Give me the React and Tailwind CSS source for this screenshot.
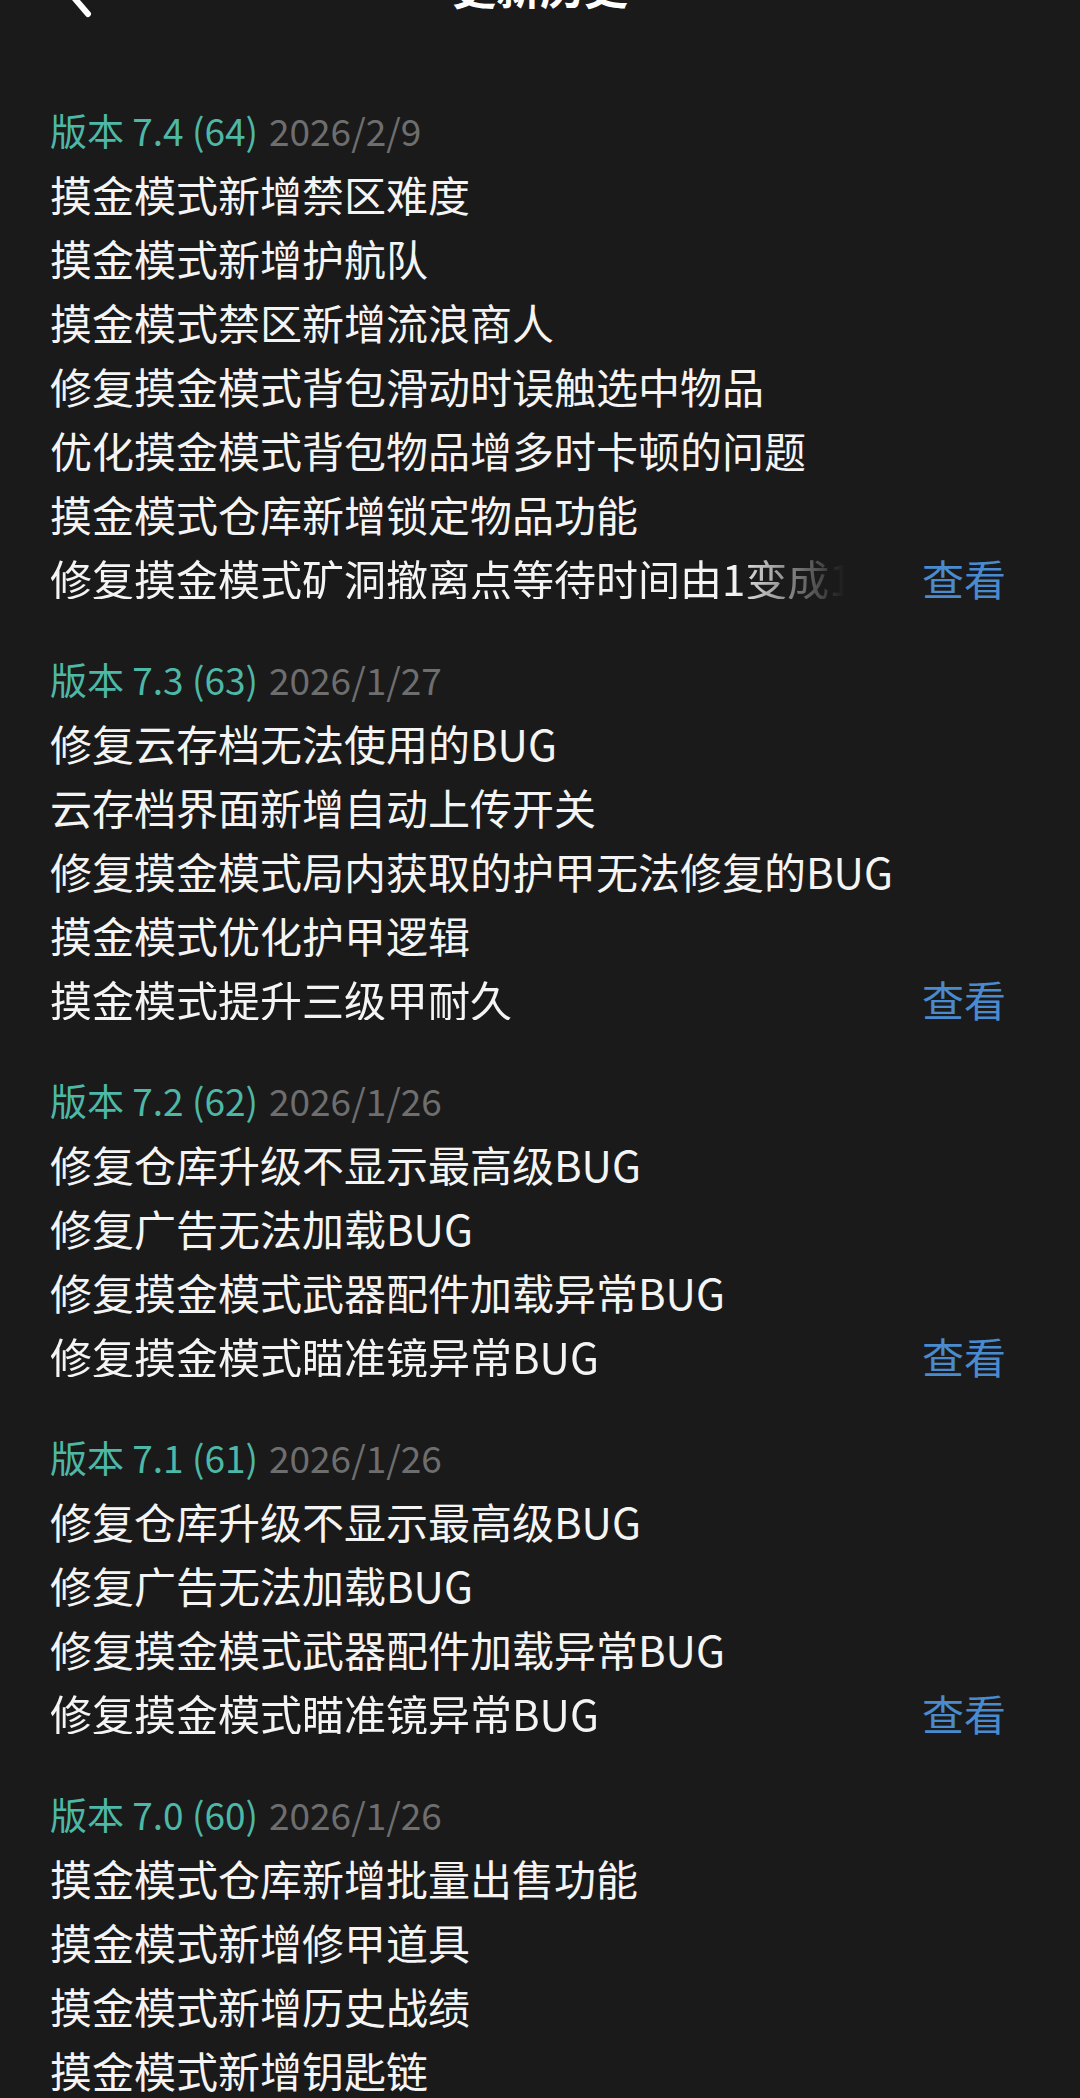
import React from 'react';

const sections = [
	{
		version: '版本 7.4 (64)',
		date: '2026/2/9',
		items: [
			'摸金模式新增禁区难度',
			'摸金模式新增护航队',
			'摸金模式禁区新增流浪商人',
			'修复摸金模式背包滑动时误触选中物品',
			'优化摸金模式背包物品增多时卡顿的问题',
			'摸金模式仓库新增锁定物品功能',
			'修复摸金模式矿洞撤离点等待时间由1变成10秒',
		],
	},
	{
		version: '版本 7.3 (63)',
		date: '2026/1/27',
		items: [
			'修复云存档无法使用的BUG',
			'云存档界面新增自动上传开关',
			'修复摸金模式局内获取的护甲无法修复的BUG',
			'摸金模式优化护甲逻辑',
			'摸金模式提升三级甲耐久',
		],
	},
	{
		version: '版本 7.2 (62)',
		date: '2026/1/26',
		items: [
			'修复仓库升级不显示最高级BUG',
			'修复广告无法加载BUG',
			'修复摸金模式武器配件加载异常BUG',
			'修复摸金模式瞄准镜异常BUG',
		],
	},
	{
		version: '版本 7.1 (61)',
		date: '2026/1/26',
		items: [
			'修复仓库升级不显示最高级BUG',
			'修复广告无法加载BUG',
			'修复摸金模式武器配件加载异常BUG',
			'修复摸金模式瞄准镜异常BUG',
		],
	},
	{
		version: '版本 7.0 (60)',
		date: '2026/1/26',
		items: [
			'摸金模式仓库新增批量出售功能',
			'摸金模式新增修甲道具',
			'摸金模式新增历史战绩',
			'摸金模式新增钥匙链',
		],
	},
];

function Section({ data, last }) {
	const lastIndex = data.items.length - 1;
	return (
		<div className={last ? '' : 'mb-[37px]'}>
			<div className="h-[64px] flex items-center text-[37px] leading-none">
				<span className="text-[#4db8a6]">{data.version}</span>
				<span className="ml-[11px] text-[#6e6e6e]">{data.date}</span>
			</div>
			{data.items.map((item, i) =>
				i === lastIndex && !last ? (
					<div key={i} className="h-[64px] flex items-center">
						<div className="w-[795px] overflow-hidden whitespace-nowrap text-[42px] leading-none text-[#f4f4f4] [mask-image:linear-gradient(to_right,black_86%,transparent)]">
							{item}
						</div>
						<div className="ml-auto text-[42px] leading-none text-[#4a8bd0]">查看</div>
					</div>
				) : (
					<div key={i} className="h-[64px] flex items-center whitespace-nowrap text-[42px] leading-none text-[#f4f4f4]">
						{item}
					</div>
				)
			)}
		</div>
	);
}

export default function App() {
	return (
		<div className="w-[1080px] h-[2098px] overflow-hidden bg-[#1a1a1a] font-['Noto_Sans_CJK_SC',sans-serif]">
			<div className="relative h-[120px] -mt-[74px] flex items-center justify-center">
				<svg className="absolute left-[52px] top-[26px]" width="44" height="68" viewBox="0 0 44 68">
					<path d="M36 6 L12 34 L36 62" fill="none" stroke="#ffffff" strokeWidth="6" strokeLinecap="round" strokeLinejoin="round" />
				</svg>
				<div className="text-[44px] leading-none font-bold text-white">更新历史</div>
			</div>
			<div className="pl-[50px] pr-[74px] pt-[52px]">
				{sections.map((s, i) => (
					<Section key={i} data={s} last={i === sections.length - 1} />
				))}
			</div>
		</div>
	);
}
